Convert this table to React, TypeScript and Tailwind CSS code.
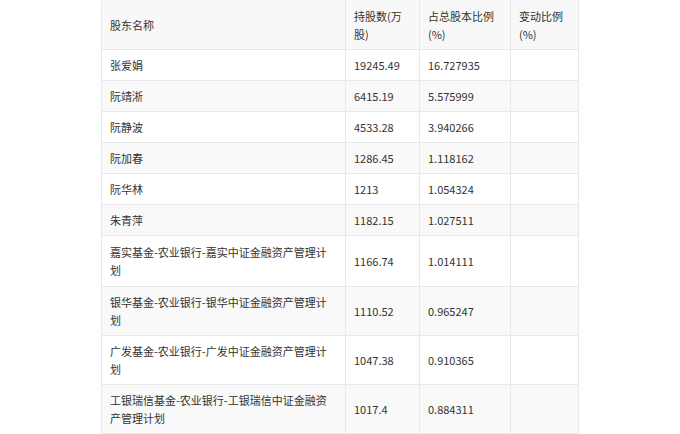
import React from "react";

const rows: [string, string, string, string][] = [
  ["张爱娟", "19245.49", "16.727935", ""],
  ["阮靖淅", "6415.19", "5.575999", ""],
  ["阮静波", "4533.28", "3.940266", ""],
  ["阮加春", "1286.45", "1.118162", ""],
  ["阮华林", "1213", "1.054324", ""],
  ["朱青萍", "1182.15", "1.027511", ""],
  ["嘉实基金-农业银行-嘉实中证金融资产管理计划", "1166.74", "1.014111", ""],
  ["银华基金-农业银行-银华中证金融资产管理计划", "1110.52", "0.965247", ""],
  ["广发基金-农业银行-广发中证金融资产管理计划", "1047.38", "0.910365", ""],
  ["工银瑞信基金-农业银行-工银瑞信中证金融资产管理计划", "1017.4", "0.884311", ""],
];

export default function App() {
  const cell = "border border-[#e8e8e8] pl-[8px] pr-[8px] align-middle text-left font-normal";
  return (
    <div
      className="w-[680px] h-[434px] bg-white overflow-hidden text-[11px] leading-[18px] text-[#333]"
      style={{ fontFamily: '"Noto Sans CJK SC", "Noto Sans", sans-serif' }}
    >
      <table className="mx-auto w-[477px] table-fixed border-collapse">
        <colgroup>
          <col className="w-[244px]" />
          <col className="w-[74px]" />
          <col className="w-[91px]" />
          <col className="w-[68px]" />
        </colgroup>
        <thead>
          <tr className="bg-[#f8f8f8]">
            <th className={`${cell} border-t-[#f8f8f8] py-[6px] pr-[14px]`}>股东名称</th>
            <th className={`${cell} border-t-[#f8f8f8] py-[6px]`}>持股数(万股)</th>
            <th className={`${cell} border-t-[#f8f8f8] py-[6px]`}>占总股本比例(%)</th>
            <th className={`${cell} border-t-[#f8f8f8] py-[6px]`}>变动比例(%)</th>
          </tr>
        </thead>
        <tbody>
          {rows.map((r, i) => {
            const py = i === 6 ? "py-[7px]" : "py-[6px]";
            return (
              <tr key={i} className={i % 2 === 1 ? "bg-[#f9f9f9]" : "bg-white"}>
                <td className={`${cell} ${py} pr-[14px]`}>{r[0]}</td>
                <td className={`${cell} ${py}`}>{r[1]}</td>
                <td className={`${cell} ${py}`}>{r[2]}</td>
                <td className={`${cell} ${py}`}>{r[3]}</td>
              </tr>
            );
          })}
        </tbody>
      </table>
    </div>
  );
}
